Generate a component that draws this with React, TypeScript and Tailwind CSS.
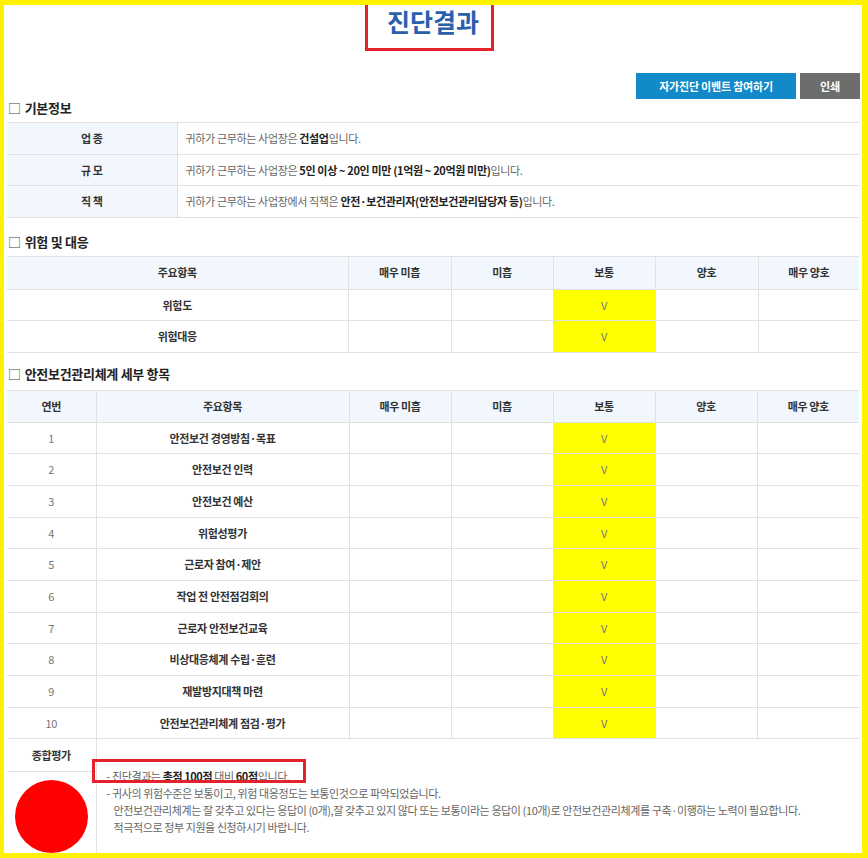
import React from "react";

const FONT = { fontFamily: '"Noto Sans CJK KR", "Noto Sans", sans-serif' };

const grades = ["매우 미흡", "미흡", "보통", "양호", "매우 양호"];

const details = [
  "안전보건 경영방침·목표",
  "안전보건 인력",
  "안전보건 예산",
  "위험성평가",
  "근로자 참여·제안",
  "작업 전 안전점검회의",
  "근로자 안전보건교육",
  "비상대응체계 수립·훈련",
  "재발방지대책 마련",
  "안전보건관리체계 점검·평가",
];

function GradeCells() {
  return (
    <>
      {grades.map((g, i) => (
        <td
          key={g}
          className={
            "border-l border-b border-[#e1e1e1] text-center text-[#777] " +
            (i === 2 ? "bg-[#ffff00]" : "")
          }
        >
          {i === 2 ? "V" : ""}
        </td>
      ))}
    </>
  );
}

function Heading({ children }: { children: React.ReactNode }) {
  return (
    <div className="flex h-[18px] items-center pl-[1px] text-[13px] font-bold tracking-[-0.3px] text-[#222]">
      <span className="mr-[4px] font-normal text-[#444]">□</span>
      {children}
    </div>
  );
}

export default function App() {
  return (
    <div
      className="relative h-[858px] w-[868px] overflow-hidden bg-white text-[11px] tracking-[-0.35px] text-[#666]"
      style={FONT}
    >
      <div className="pl-[7px] pr-[9px]">
        {/* Title */}
        <div className="flex h-[43px] items-center justify-center">
          <h1 className="text-[25px] font-bold tracking-[0px] text-[#2b5fae]">진단결과</h1>
        </div>

        {/* Buttons */}
        <div className="mt-[30px] -mr-[1px] flex justify-end gap-[4px]">
          <button className="h-[26px] w-[160px] bg-[#1289c8] text-[11px] font-bold tracking-[-0.2px] text-white">
            자가진단 이벤트 참여하기
          </button>
          <button className="h-[26px] w-[60px] bg-[#6d6d6d] text-[11px] font-bold tracking-[-0.2px] text-white">
            인쇄
          </button>
        </div>

        {/* Basic info */}
        <Heading>기본정보</Heading>
        <table className="mt-[5px] w-full table-fixed border-collapse border-t border-[#e1e1e1]">
          <colgroup>
            <col className="w-[170px]" />
            <col />
          </colgroup>
          <tbody>
            {[
              ["업 종", <>귀하가 근무하는 사업장은 <b className="text-[#222]">건설업</b>입니다.</>],
              ["규 모", <>귀하가 근무하는 사업장은 <b className="text-[#222]">5인 이상 ~ 20인 미만 (1억원 ~ 20억원 미만)</b>입니다.</>],
              ["직 책", <>귀하가 근무하는 사업장에서 직책은 <b className="text-[#222]">안전·보건관리자(안전보건관리담당자 등)</b>입니다.</>],
            ].map(([label, value], i) => (
              <tr key={i} className="h-[31.5px]">
                <td className="border-b border-[#e1e1e1] bg-[#f1f7fd] text-center font-bold text-[#333]">
                  {label}
                </td>
                <td className="border-l border-b border-[#e1e1e1] pl-[8px]">{value}</td>
              </tr>
            ))}
          </tbody>
        </table>

        {/* Risk */}
        <div className="mt-[15px]">
          <Heading>위험 및 대응</Heading>
        </div>
        <table className="mt-[5px] w-full table-fixed border-collapse border-t border-[#e1e1e1]">
          <colgroup>
            <col className="w-[341px]" />
            <col className="w-[103px]" />
            <col className="w-[102px]" />
            <col className="w-[102px]" />
            <col className="w-[103px]" />
            <col />
          </colgroup>
          <thead>
            <tr className="h-[33px] bg-[#f1f7fd] font-bold text-[#333]">
              <th className="border-b border-[#e1e1e1] font-bold">주요항목</th>
              {grades.map((g) => (
                <th key={g} className="border-l border-b border-[#e1e1e1] font-bold">
                  {g}
                </th>
              ))}
            </tr>
          </thead>
          <tbody>
            {["위험도", "위험대응"].map((r) => (
              <tr key={r} className="h-[31.5px]">
                <td className="border-b border-[#e1e1e1] text-center font-bold text-[#333]">{r}</td>
                <GradeCells />
              </tr>
            ))}
          </tbody>
        </table>

        {/* Details */}
        <div className="mt-[12px]">
          <Heading>안전보건관리체계 세부 항목</Heading>
        </div>
        <table className="mt-[7px] w-full table-fixed border-collapse border-t border-[#e1e1e1]">
          <colgroup>
            <col className="w-[89px]" />
            <col className="w-[253px]" />
            <col className="w-[102px]" />
            <col className="w-[102px]" />
            <col className="w-[102px]" />
            <col className="w-[102px]" />
            <col />
          </colgroup>
          <thead>
            <tr className="h-[32px] bg-[#f1f7fd] text-[#333]">
              <th className="border-b border-[#e1e1e1] font-bold">연번</th>
              <th className="border-l border-b border-[#e1e1e1] font-bold">주요항목</th>
              {grades.map((g) => (
                <th key={g} className="border-l border-b border-[#e1e1e1] font-bold">
                  {g}
                </th>
              ))}
            </tr>
          </thead>
          <tbody>
            {details.map((d, i) => (
              <tr key={d} className="h-[31.7px]">
                <td className="border-b border-[#e1e1e1] text-center text-[#777]">{i + 1}</td>
                <td className="border-l border-b border-[#e1e1e1] text-center font-bold text-[#333]">{d}</td>
                <GradeCells />
              </tr>
            ))}
            <tr className="h-[33px]">
              <td className="border-b border-[#e1e1e1] text-center font-bold text-[#333]">종합평가</td>
              <td
                colSpan={6}
                rowSpan={2}
                className="border-l border-[#e1e1e1] pl-[10px] pt-[29px] align-top leading-[17px] tracking-[-0.4px]"
              >
                <div>
                  - 진단결과는 <b className="text-[#222]">총점 100점</b> 대비{" "}
                  <b className="text-[#222]">60점</b>입니다.
                </div>
                <div>- 귀사의 위험수준은 보통이고, 위험 대응정도는 보통인것으로 파악되었습니다.</div>
                <div className="pl-[7px]">
                  안전보건관리체계는 잘 갖추고 있다는 응답이 (0개),잘 갖추고 있지 않다 또는 보통이라는 응답이
                  (10개)로 안전보건관리체계를 구축·이행하는 노력이 필요합니다.
                </div>
                <div className="pl-[7px]">적극적으로 정부 지원을 신청하시기 바랍니다.</div>
              </td>
            </tr>
            <tr className="h-[100px]">
              <td className="pt-[8px] align-top">
                <div className="mx-auto h-[73px] w-[73px] rounded-full bg-[#ff0000]" />
              </td>
            </tr>
          </tbody>
        </table>
      </div>

      {/* Annotation overlays */}
      <div className="pointer-events-none absolute left-[365px] top-[-3px] h-[54px] w-[129px] border-[3px] border-[#e3232c]" />
      <div className="pointer-events-none absolute left-[92px] top-[759px] h-[24px] w-[214px] border-[3px] border-[#e3232c]" />
      <div className="pointer-events-none absolute inset-0 border-b-[5px] border-l-[4px] border-r-[6px] border-t-[5px] border-[#fff200]" />
    </div>
  );
}
